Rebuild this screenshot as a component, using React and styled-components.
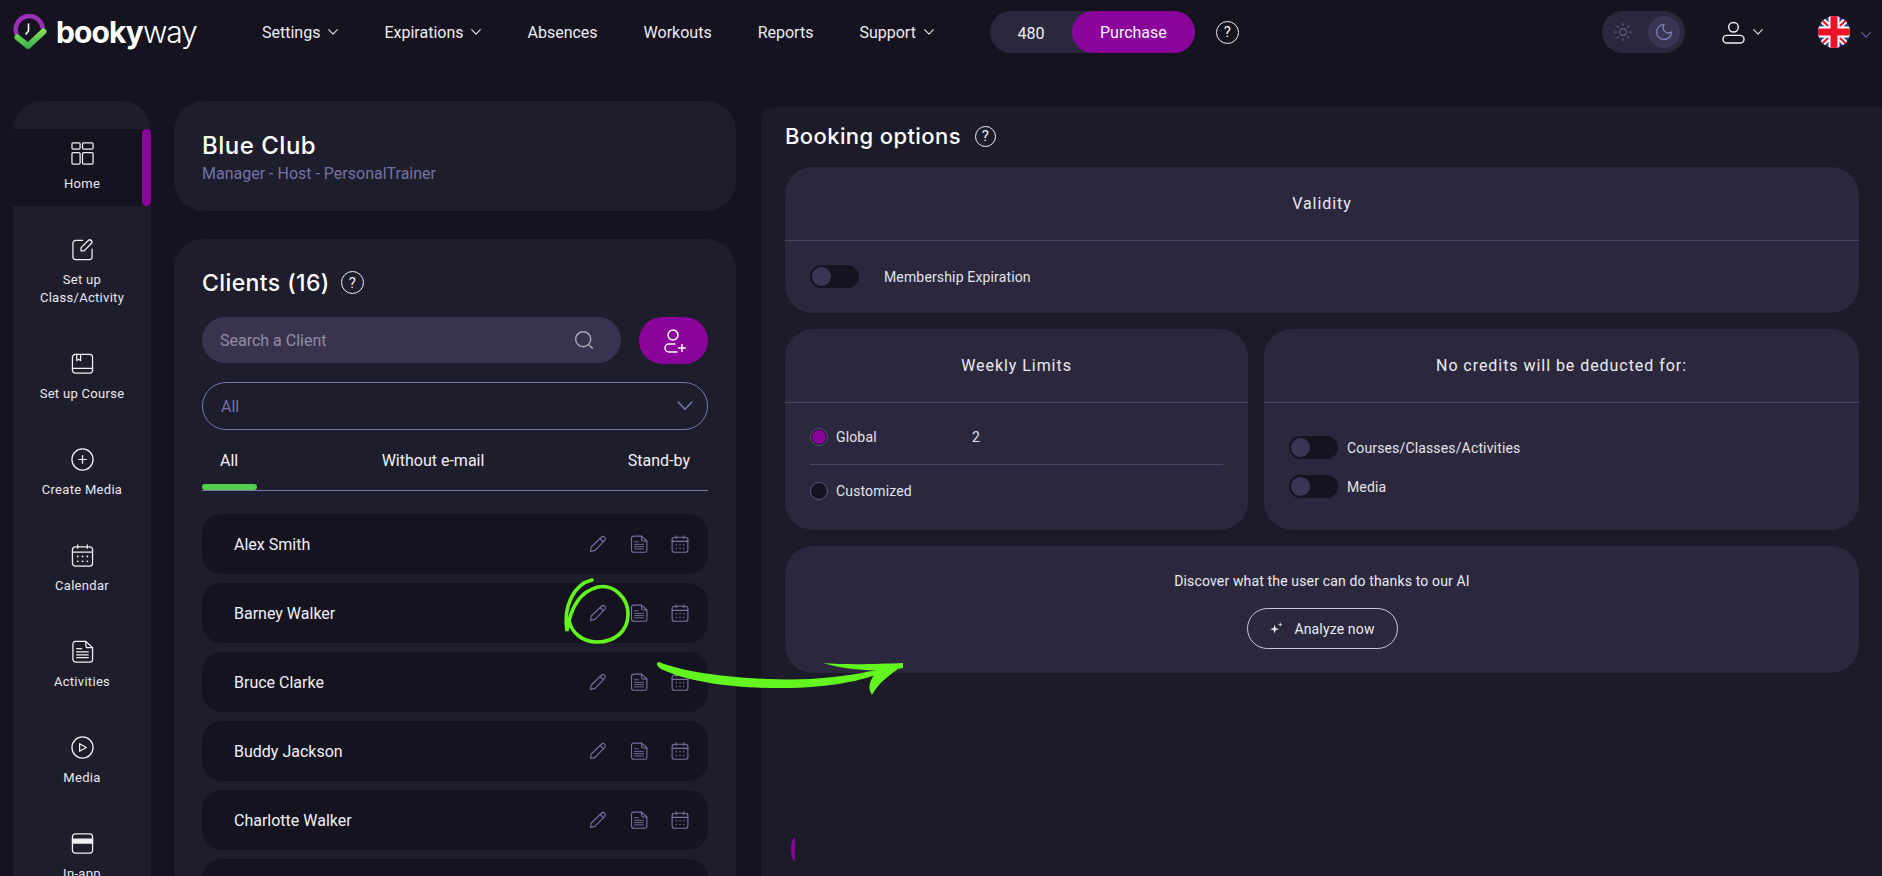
import styled, { createGlobalStyle } from "styled-components";
import { Sun, Moon } from "lucide-react";

const GlobalStyle = createGlobalStyle`
  html, body {
    margin: 0;
    height: 100%;
    overflow: hidden;
    background: #14131f;
  }
  * { box-sizing: border-box; }
  body { font-family: Roboto, "Liberation Sans", sans-serif; color: #f1f0f6; }
`;

const Page = styled.div`
  position: relative;
  width: 1882px;
  height: 876px;
  overflow: hidden;
  background: #14131f;
`;

/* header */
const Header = styled.header`
  display: flex;
  align-items: center;
  height: 64px;
  padding: 0 11px 0 13px;
`;
const LogoBox = styled.div`
  display: flex;
  align-items: center;
  width: 249px;
  flex-shrink: 0;
`;
const LogoText = styled.div`
  margin-left: 9px;
  font-family: Inter, sans-serif;
  font-size: 30px;
  line-height: 34px;
  letter-spacing: -0.9px;
  color: #fff;
  font-weight: 700;
  span { font-weight: 300; letter-spacing: -1.2px; }
`;
const Nav = styled.nav`
  display: flex;
  align-items: center;
  gap: 46px;
`;
const NavItem = styled.div`
  display: flex;
  align-items: center;
  gap: 8px;
  font-size: 16px;
  color: #ecebf2;
`;
const CreditPill = styled.div`
  display: flex;
  align-items: center;
  width: 205px;
  height: 42px;
  margin-left: 56px;
  border-radius: 21px;
  background: #2b283d;
  font-size: 16px;
`;
const CreditCount = styled.div`
  width: 82px;
  padding-top: 2px;
  text-align: center;
`;
const PurchaseBtn = styled.div`
  flex: 1;
  height: 42px;
  line-height: 44px;
  text-align: center;
  border-radius: 21px;
  background: #8a039b;
`;
const Help = styled.span`
  display: inline-flex;
  align-items: center;
  justify-content: center;
  flex-shrink: 0;
  width: ${(p) => p.$size || 23}px;
  height: ${(p) => p.$size || 23}px;
  margin-left: ${(p) => p.$left || 0}px;
  border: 1.3px solid #f1f0f6;
  border-radius: 50%;
  font-family: Roboto, sans-serif;
  font-size: 15px;
  font-weight: 400;
  letter-spacing: 0;
  color: #f1f0f6;
`;
const RightGroup = styled.div`
  display: flex;
  align-items: center;
  margin-left: auto;
`;
const ThemePill = styled.div`
  display: flex;
  align-items: center;
  justify-content: space-between;
  width: 83px;
  height: 42px;
  padding: 0 5px 0 11px;
  border-radius: 21px;
  background: #2b283d;
  color: #5d5a7c;
`;
const MoonDot = styled.div`
  display: flex;
  align-items: center;
  justify-content: center;
  width: 32px;
  height: 32px;
  border-radius: 50%;
  background: #3a3553;
  color: #7f7db5;
`;
const UserBtn = styled.div`
  display: flex;
  align-items: center;
  gap: 8px;
  margin-left: 37px;
`;
const FlagBtn = styled.div`
  display: flex;
  align-items: center;
  gap: 11px;
  margin-left: 55px;
`;

/* page body */
const Body = styled.main`
  display: flex;
  height: 812px;
  padding: 37px 0 0 13px;
`;
const Sidebar = styled.nav`
  display: flex;
  flex-direction: column;
  gap: 19px;
  flex-shrink: 0;
  width: 138px;
  padding-top: 28px;
  border-radius: 30px 30px 0 0;
  background: #1e1d2b;
`;
const SideItem = styled.div`
  position: relative;
  display: flex;
  flex-direction: column;
  align-items: center;
  flex-shrink: 0;
  padding: 12.5px 0 13.5px;
  background: ${(p) => (p.$active ? "#14131f" : "transparent")};
  ${(p) =>
    p.$active &&
    `&::after {
      content: "";
      position: absolute;
      top: 0;
      right: 0;
      width: 9px;
      height: 100%;
      border-radius: 5px;
      background: #8a039b;
    }`}
`;
const SideLabel = styled.div`
  margin-top: 10px;
  font-size: 13px;
  line-height: 18px;
  letter-spacing: 0.3px;
  text-align: center;
  color: #e9e8ef;
`;
const Middle = styled.section`
  display: flex;
  flex-direction: column;
  gap: 28px;
  flex-shrink: 0;
  width: 562px;
  margin-left: 23px;
`;
const ClubCard = styled.div`
  height: 110px;
  padding: 30px 28px 0;
  border-radius: 30px;
  background: #1e1d2b;
`;
const ClubName = styled.div`
  font-family: Inter, sans-serif;
  font-size: 24px;
  line-height: 30px;
  font-weight: 500;
  letter-spacing: 0.5px;
  color: #fff;
`;
const ClubRoles = styled.div`
  margin-top: 2px;
  font-size: 16px;
  line-height: 22px;
  color: #7472a8;
`;
const ClientsCard = styled.div`
  flex: 1;
  padding: 28px 28px 0;
  border-radius: 30px 30px 0 0;
  background: #1e1d2b;
  overflow: hidden;
`;
const SectionTitle = styled.div`
  display: flex;
  align-items: center;
  height: 30px;
  padding-top: 1px;
  font-family: Inter, sans-serif;
  font-size: 23px;
  font-weight: 500;
  letter-spacing: 0.4px;
  color: #fff;
`;
const SearchRow = styled.div`
  display: flex;
  gap: 18px;
  margin-top: 20px;
`;
const SearchBox = styled.div`
  display: flex;
  align-items: center;
  justify-content: space-between;
  flex: 1;
  height: 46px;
  padding: 0 27px 0 18px;
  border-radius: 23px;
  background: #393350;
  font-size: 16px;
  color: #918ea3;
`;
const AddBtn = styled.div`
  display: flex;
  align-items: center;
  justify-content: center;
  width: 69px;
  height: 47px;
  border-radius: 24px;
  background: #8a039b;
`;
const SelectBox = styled.div`
  display: flex;
  align-items: center;
  justify-content: space-between;
  height: 48px;
  margin-top: 18px;
  padding: 0 14px 0 18px;
  border: 1px solid #7a78ac;
  border-radius: 24px;
  font-size: 16px;
  color: #7472a8;
`;
const Tabs = styled.div`
  position: relative;
  display: flex;
  justify-content: space-between;
  height: 61px;
  padding: 21px 18px 0;
  border-bottom: 1px solid #7a78ac;
  font-size: 16px;
  line-height: 19px;
  &::after {
    content: "";
    position: absolute;
    left: 0;
    bottom: 0;
    width: 55px;
    height: 6px;
    border-radius: 3px;
    background: #53cd4d;
  }
`;
const ClientList = styled.div`
  display: flex;
  flex-direction: column;
  gap: 9px;
  margin-top: 23px;
`;
const ClientRow = styled.div`
  display: flex;
  align-items: center;
  flex-shrink: 0;
  height: 60px;
  padding: 0 19px 0 32px;
  border-radius: 20px;
  background: #14131f;
  font-size: 16px;
`;
const RowIcons = styled.div`
  display: flex;
  gap: 23px;
  margin-left: auto;
  color: #75739f;
`;

/* booking options */
const Panel = styled.section`
  position: relative;
  flex: 1;
  margin: 6px 0 0 25px;
  padding: 14px 23px 0 24px;
  border-radius: 12px 0 0 0;
  background: #1c1b29;
`;
const PanelTitle = styled(SectionTitle)`
  padding-top: 0;
  font-size: 22px;
  letter-spacing: 0.4px;
`;
const OptionGrid = styled.div`
  display: grid;
  grid-template-columns: 463px 1fr;
  gap: 16px;
  margin-top: 16px;
`;
const OptionCard = styled.div`
  grid-column: ${(p) => (p.$wide ? "1 / -1" : "auto")};
  min-height: ${(p) => p.$height}px;
  border-radius: 28px;
  background: #2b283d;
`;
const CardTitle = styled.div`
  height: 74px;
  padding-top: 27px;
  border-bottom: 1px solid #4a4468;
  font-size: 16px;
  line-height: 19px;
  letter-spacing: 0.95px;
  text-align: center;
  color: #ecebf2;
`;
const ToggleRow = styled.div`
  display: flex;
  align-items: center;
  gap: ${(p) => p.$gap}px;
  font-size: 14px;
  letter-spacing: 0.15px;
  color: #e4e3ea;
`;
const Toggle = styled.div`
  display: flex;
  align-items: center;
  width: 49px;
  height: 23px;
  padding-left: 2px;
  border-radius: 12px;
  background: #14131f;
  &::before {
    content: "";
    width: 19px;
    height: 19px;
    border-radius: 50%;
    background: #3a3553;
  }
`;
const ValidityBody = styled.div`
  padding: 24px 25px 0;
`;
const LimitsBody = styled.div`
  padding: 19px 25px 0;
`;
const LimitRow = styled.div`
  display: flex;
  align-items: center;
  height: ${(p) => (p.$first ? 43 : 40)}px;
  padding: ${(p) => (p.$first ? "0 0 13px" : "12px 0 0")};
  border-bottom: ${(p) => (p.$first ? "1px solid #4a4468" : "none")};
  font-size: 14px;
  letter-spacing: 0.15px;
  color: #e4e3ea;
`;
const Radio = styled.span`
  display: flex;
  align-items: center;
  justify-content: center;
  width: 18px;
  height: 18px;
  margin-right: 8px;
  border: 1px solid #5a5578;
  border-radius: 50%;
  background: #14131f;
  ${(p) =>
    p.$on &&
    `&::before {
      content: "";
      width: 14px;
      height: 14px;
      border-radius: 50%;
      background: #8a039b;
    }`}
`;
const LimitName = styled.span`
  width: 136px;
`;
const CreditsBody = styled.div`
  display: flex;
  flex-direction: column;
  gap: 16px;
  padding: 33px 25px 0;
`;
const AiCard = styled(OptionCard)`
  display: flex;
  flex-direction: column;
  align-items: center;
  padding-top: 26px;
  font-size: 14px;
  line-height: 18px;
  letter-spacing: 0.15px;
  color: #ecebf2;
`;
const AnalyzeBtn = styled.div`
  display: flex;
  align-items: center;
  justify-content: center;
  gap: 10px;
  width: 151px;
  height: 41px;
  margin-top: 18px;
  border: 1px solid #c9c8d5;
  border-radius: 21px;
`;
const ScrollThumb = styled.div`
  position: absolute;
  left: 30px;
  top: 731px;
  width: 4px;
  height: 23px;
  border-radius: 100% 0 0 100% / 50%;
  background: #8a039b;
`;
const Scribble = styled.svg`
  position: absolute;
  top: 0;
  left: 0;
  pointer-events: none;
`;
const IconSvg = styled.svg`
  display: block;
  flex-shrink: 0;
  fill: none;
  stroke: currentColor;
  stroke-width: ${(p) => p.$stroke || 1.3};
  stroke-linecap: round;
  stroke-linejoin: round;
  color: ${(p) => p.$color || "currentColor"};
`;

const Icon = ({ size = 23, stroke, color, children }) => (
  <IconSvg width={size} height={size} viewBox="0 0 24 24" $stroke={stroke} $color={color}>
    {children}
  </IconSvg>
);

const Chevron = ({ w = 10, color = "#e4e3ea", stroke = 1.1, style }) => (
  <IconSvg width={w} height={w * 0.6} viewBox="0 0 10 6" $stroke={stroke} $color={color} style={style}>
    <path d="M.7.7 5 5.2 9.3.7" />
  </IconSvg>
);

const HomeIcon = () => (
  <Icon>
    <rect x="1" y="1" width="8.5" height="6.5" rx="1.2" />
    <rect x="12" y="1" width="11" height="6.5" rx="1.2" />
    <rect x="1" y="11" width="8.5" height="12" rx="1.2" />
    <rect x="12" y="11" width="11" height="12" rx="1.2" />
  </Icon>
);
const EditIcon = () => (
  <Icon>
    <path d="M12 2.5H5a3 3 0 0 0-3 3v14a3 3 0 0 0 3 3h14a3 3 0 0 0 3-3v-8" />
    <path d="M10.5 13.5v-3.4L18 2.6a2.2 2.2 0 0 1 3.2 3.2l-7.5 7.7h-3.2z" />
  </Icon>
);
const BookIcon = () => (
  <Icon>
    <rect x="1.5" y="2.5" width="21" height="19.5" rx="3" />
    <path d="M1.5 17h21M6 2.5V9l2-1.5L10 9V2.5" />
  </Icon>
);
const PlusCircle = () => (
  <Icon>
    <circle cx="12" cy="12" r="11" />
    <path d="M12 8v8M8 12h8" />
  </Icon>
);
const CalendarIcon = ({ size, stroke }) => (
  <Icon size={size} stroke={stroke}>
    <rect x="1.5" y="3" width="21" height="20" rx="3" />
    <path d="M1.5 8.5h21M7 1v3.5M17 1v3.5" />
    <path d="M7 13h.1M12 13h.1M17 13h.1M7 18h.1M12 18h.1M17 18h.1" strokeWidth="1.8" />
  </Icon>
);
const DocIcon = ({ size, stroke, lineWidth }) => (
  <Icon size={size} stroke={stroke}>
    <path d="M5 1.5h10.5L22.5 8v12.5a2.5 2.5 0 0 1-2.5 2.5H5a3 3 0 0 1-3-3v-15a3 3 0 0 1 3-3.5z" />
    <path d="M15.5 1.5V6a2 2 0 0 0 2 2h5" />
    <path d="M6 9h5M6 12.5h12M6 15.5h12M6 18.5h12" strokeWidth={lineWidth} />
  </Icon>
);
const PlayIcon = () => (
  <Icon>
    <circle cx="12" cy="12" r="11" />
    <path d="M9 8v8l7-4z" />
  </Icon>
);
const CardIcon = () => (
  <Icon>
    <rect x="1.5" y="2" width="21" height="20" rx="3" />
    <rect x="1.5" y="7.5" width="21" height="4" fill="currentColor" />
  </Icon>
);
const PencilIcon = () => (
  <Icon size={18} stroke={1.5}>
    <path d="M2 22l1-6L16.5 3a3 3 0 0 1 4.5 4.2L8 20.5z" />
    <path d="M15 5l4.5 4" />
  </Icon>
);
const SearchIcon = () => (
  <Icon size={20} stroke={1.8} color="#a6a4b1">
    <circle cx="11" cy="11" r="9" />
    <path d="M18 18l4 4" />
  </Icon>
);
const UserIcon = () => (
  <Icon size={23} stroke={1.5} color="#f1f0f6">
    <circle cx="12" cy="6.5" r="5" />
    <rect x="1" y="15" width="22" height="8" rx="4" />
  </Icon>
);
const UserPlusIcon = () => (
  <Icon size={24} stroke={1.5} color="#fff">
    <circle cx="11" cy="6" r="5" />
    <path d="M13 15H7a4 4 0 0 0 0 8h8M16.5 19h7M20 15.5v7" />
  </Icon>
);
const SparkIcon = () => (
  <Icon size={15} stroke={0.1} color="#e4e3ea">
    <path fill="currentColor" d="M9 6l1.6 5.2L16 13l-5.4 1.8L9 20l-1.6-5.2L2 13l5.4-1.8z" />
    <path fill="currentColor" d="M18 2l.9 2.6 2.6.9-2.6.9L18 9l-.9-2.6-2.6-.9 2.6-.9z" />
  </Icon>
);

const BookyMark = () => (
  <svg width="34" height="36" viewBox="0 0 34 36">
    <defs>
      <linearGradient id="checkGrad" gradientUnits="userSpaceOnUse" x1="16" y1="14" x2="16" y2="36">
        <stop offset="0" stopColor="#8ee65a" />
        <stop offset="1" stopColor="#2fa84a" />
      </linearGradient>
    </defs>
    <path d="M3.5 20A13.5 13.5 0 1 1 29.5 13" fill="none" stroke="#9a2fb8" strokeWidth="4.5" strokeLinecap="round" />
    <path d="M15.5 10v7l-2.5 3" fill="none" stroke="#fff" strokeWidth="1.6" strokeLinecap="round" />
    <path d="M4.5 23.5 15 32 30.5 17.5" fill="none" stroke="url(#checkGrad)" strokeWidth="6" strokeLinecap="round" strokeLinejoin="round" />
  </svg>
);

const UkFlag = () => (
  <svg width="32" height="32" viewBox="0 0 32 32">
    <defs>
      <clipPath id="flagClip">
        <circle cx="16" cy="16" r="16" />
      </clipPath>
    </defs>
    <g clipPath="url(#flagClip)">
      <rect width="32" height="32" fill="#2b3a8c" />
      <path d="M0 0l32 32M32 0L0 32" stroke="#fff" strokeWidth="6" />
      <path d="M0 0l32 32M32 0L0 32" stroke="#ee1127" strokeWidth="2" />
      <path d="M16 0v32M0 16h32" stroke="#fff" strokeWidth="11" />
      <path d="M16 0v32M0 16h32" stroke="#ee1127" strokeWidth="7" />
    </g>
  </svg>
);

const sideItems = [
  { icon: <HomeIcon />, label: "Home", active: true },
  { icon: <EditIcon />, label: <>Set up<br />Class/Activity</> },
  { icon: <BookIcon />, label: "Set up Course" },
  { icon: <PlusCircle />, label: "Create Media" },
  { icon: <CalendarIcon size={23} />, label: "Calendar" },
  { icon: <DocIcon size={23} />, label: "Activities" },
  { icon: <PlayIcon />, label: "Media" },
  { icon: <CardIcon />, label: "In-app" },
];

const navItems = [
  { label: "Settings", menu: true },
  { label: "Expirations", menu: true },
  { label: "Absences" },
  { label: "Workouts" },
  { label: "Reports" },
  { label: "Support", menu: true },
];

const clients = ["Alex Smith", "Barney Walker", "Bruce Clarke", "Buddy Jackson", "Charlotte Walker", "Daisy Hill"];

export default function App() {
  return (
    <Page>
      <GlobalStyle />
      <Header>
        <LogoBox>
          <BookyMark />
          <LogoText>booky<span>way</span></LogoText>
        </LogoBox>
        <Nav>
          {navItems.map((item) => (
            <NavItem key={item.label}>
              {item.label}
              {item.menu && <Chevron />}
            </NavItem>
          ))}
        </Nav>
        <CreditPill>
          <CreditCount>480</CreditCount>
          <PurchaseBtn>Purchase</PurchaseBtn>
        </CreditPill>
        <Help $left={21}>?</Help>
        <RightGroup>
          <ThemePill>
            <Sun size={20} strokeWidth={1.5} />
            <MoonDot><Moon size={20} strokeWidth={1.6} /></MoonDot>
          </ThemePill>
          <UserBtn>
            <UserIcon />
            <Chevron />
          </UserBtn>
          <FlagBtn>
            <UkFlag />
            <Chevron color="#6d6b9c" style={{ marginTop: 6 }} />
          </FlagBtn>
        </RightGroup>
      </Header>

      <Body>
        <Sidebar>
          {sideItems.map((item, i) => (
            <SideItem key={i} $active={item.active}>
              {item.icon}
              <SideLabel>{item.label}</SideLabel>
            </SideItem>
          ))}
        </Sidebar>

        <Middle>
          <ClubCard>
            <ClubName>Blue Club</ClubName>
            <ClubRoles>Manager - Host - PersonalTrainer</ClubRoles>
          </ClubCard>
          <ClientsCard>
            <SectionTitle>
              Clients (16)
              <Help $left={11}>?</Help>
            </SectionTitle>
            <SearchRow>
              <SearchBox>
                Search a Client
                <SearchIcon />
              </SearchBox>
              <AddBtn><UserPlusIcon /></AddBtn>
            </SearchRow>
            <SelectBox>
              All
              <Chevron w={16} color="#7a78ac" stroke={0.9} />
            </SelectBox>
            <Tabs>
              <span>All</span>
              <span>Without e-mail</span>
              <span>Stand-by</span>
            </Tabs>
            <ClientList>
              {clients.map((name) => (
                <ClientRow key={name}>
                  {name}
                  <RowIcons>
                    <PencilIcon />
                    <DocIcon size={18} stroke={1.5} lineWidth={1.2} />
                    <CalendarIcon size={18} stroke={1.5} />
                  </RowIcons>
                </ClientRow>
              ))}
            </ClientList>
          </ClientsCard>
        </Middle>

        <Panel>
          <PanelTitle>
            Booking options
            <Help $size={21} $left={14}>?</Help>
          </PanelTitle>
          <OptionGrid>
            <OptionCard $wide $height={146}>
              <CardTitle>Validity</CardTitle>
              <ValidityBody>
                <ToggleRow $gap={25}>
                  <Toggle />
                  Membership Expiration
                </ToggleRow>
              </ValidityBody>
            </OptionCard>
            <OptionCard $height={201}>
              <CardTitle>Weekly Limits</CardTitle>
              <LimitsBody>
                <LimitRow $first>
                  <Radio $on />
                  <LimitName>Global</LimitName>
                  2
                </LimitRow>
                <LimitRow>
                  <Radio />
                  <LimitName>Customized</LimitName>
                </LimitRow>
              </LimitsBody>
            </OptionCard>
            <OptionCard $height={201}>
              <CardTitle>No credits will be deducted for:</CardTitle>
              <CreditsBody>
                <ToggleRow $gap={9}>
                  <Toggle />
                  Courses/Classes/Activities
                </ToggleRow>
                <ToggleRow $gap={9}>
                  <Toggle />
                  Media
                </ToggleRow>
              </CreditsBody>
            </OptionCard>
            <AiCard $wide $height={127}>
              Discover what the user can do thanks to our AI
              <AnalyzeBtn>
                <SparkIcon />
                Analyze now
              </AnalyzeBtn>
            </AiCard>
          </OptionGrid>
          <ScrollThumb />
        </Panel>
      </Body>

      <Scribble width="1882" height="876" viewBox="0 0 1882 876">
        <g fill="none" stroke="#62f51f" strokeWidth="3.6" strokeLinecap="round">
          <path d="M592 580C574 584 563 606 567 631C570 610 578 592 598 587C614 584 628 598 628 614C628 632 614 642 597 642C582 642 571 632 569 620" />
        </g>
        <g fill="#62f51f">
          <path d="M659 662C690 675 760 681 810 679C845 677 875 671 902 664C875 678 840 687 790 688C740 689 690 683 661 669C656 666 656 662 659 662Z" />
          <path d="M823 663C845 665 880 664 903 663L903 668C880 672 850 671 823 663Z" />
          <path d="M903 665C890 675 878 683 872 695C867 688 870 680 875 674L892 665Z" />
        </g>
      </Scribble>
    </Page>
  );
}
